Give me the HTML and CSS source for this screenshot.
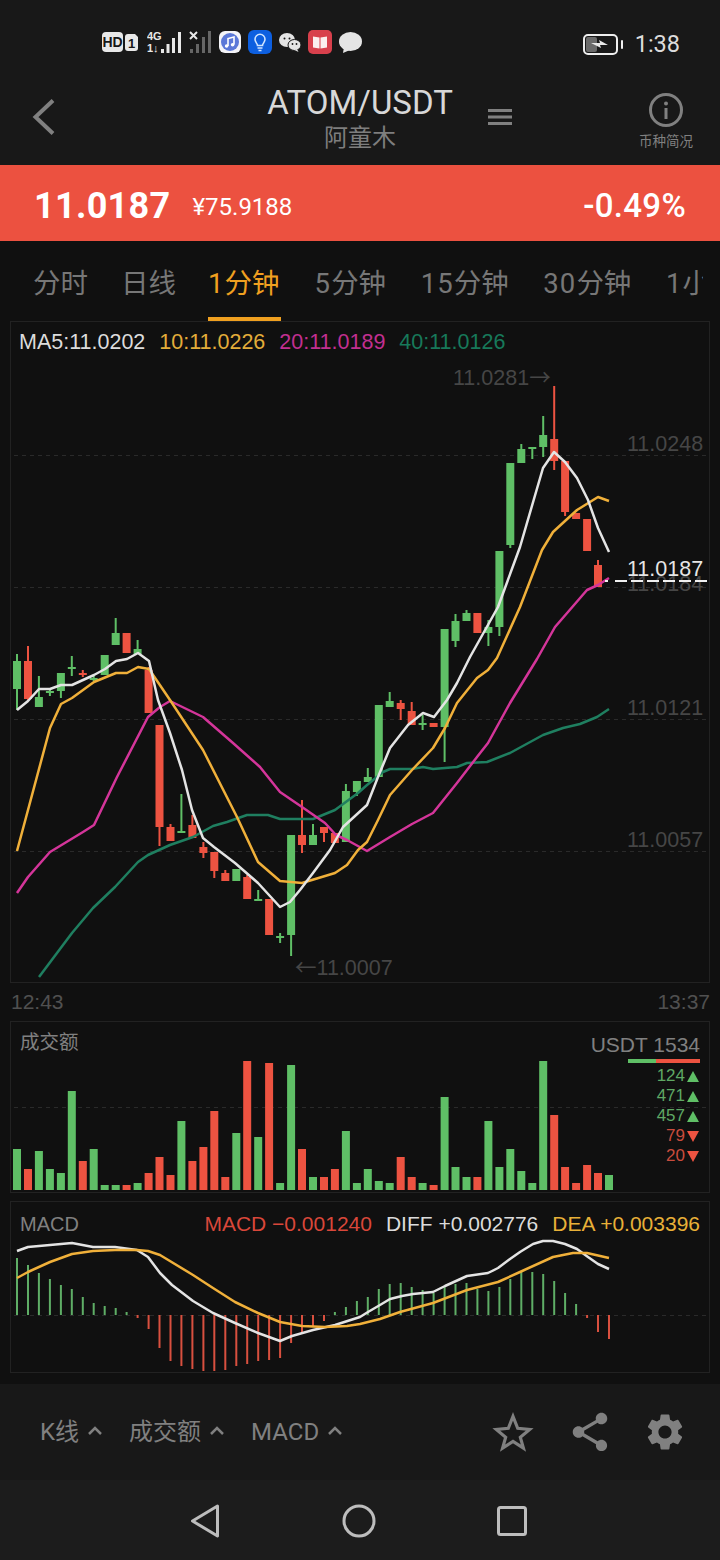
FILE: index.html

```html
<!DOCTYPE html>
<html lang="zh">
<head>
    <meta charset="UTF-8">
    <meta name="viewport" content="width=device-width, initial-scale=1.0">
    <title>ATOM/USDT</title>
    <link rel="stylesheet" href="styles.css">
</head>
<body>
    <div class="status-bar">
        <div class="status-icons">
            <svg class="ic-hd" width="21" height="20" viewBox="0 0 21 20"><rect width="21" height="20" rx="4" fill="#e8e8e8"/><text x="10.5" y="15" class="hd-text">HD</text></svg>
            <svg class="ic-sim" width="13" height="17" viewBox="0 0 13 17"><path d="M3 0h7l3 3v11a3 3 0 0 1-3 3H3a3 3 0 0 1-3-3V3a3 3 0 0 1 3-3z" fill="#e8e8e8"/><text x="6.5" y="13.5" class="sim-text">1</text></svg>
            <svg width="35" height="23" viewBox="0 0 35 23">
                <text x="0" y="9" class="net-text">4G</text>
                <text x="0" y="21" class="net-text">1↓</text>
                <g fill="#e8e8e8"><rect x="14" y="18" width="3" height="4"/><rect x="19.5" y="13" width="3" height="9"/><rect x="25" y="7" width="3" height="15"/><rect x="31" y="1" width="3" height="21"/></g>
            </svg>
            <svg width="23" height="23" viewBox="0 0 23 23">
                <path d="M1 1l7 7M8 1L1 8" stroke="#e8e8e8" stroke-width="2"/>
                <g fill="#666"><rect x="1" y="18" width="3" height="4"/><rect x="7" y="13" width="3" height="9"/><rect x="13" y="6" width="3" height="16"/><rect x="19" y="0" width="3" height="22"/></g>
            </svg>
            <svg width="22" height="22" viewBox="0 0 22 22"><rect width="22" height="22" rx="6" fill="#f4f4f8"/><circle cx="11" cy="11" r="9" fill="#5b78d8"/><path d="M9 15V7.5l6-1.5v7.5" fill="none" stroke="#fff" stroke-width="1.6"/><circle cx="7.6" cy="15" r="1.8" fill="#fff"/><circle cx="13.6" cy="13.8" r="1.8" fill="#fff"/></svg>
            <svg width="24" height="24" viewBox="0 0 24 24"><rect width="24" height="24" rx="6" fill="#0d5fe0"/><path d="M9.500 15.500c0-2-2.500-3-2.500-6.200a5 5 0 0 1 10 0c0 3.200-2.500 4.200-2.500 6.200z" fill="none" stroke="#cfe4ff" stroke-width="1.6"/><path d="M9.500 18h5M10.500 20.500h3" stroke="#cfe4ff" stroke-width="1.500"/></svg>
            <svg width="22" height="19" viewBox="0 0 22 19"><ellipse cx="8" cy="7" rx="8" ry="7" fill="#e4e4e4"/><ellipse cx="15.500" cy="12" rx="6.500" ry="5.500" fill="#e4e4e4" stroke="#171717"/><path d="M18 16l1.500 3-4-2z" fill="#e4e4e4"/><circle cx="5.500" cy="5.500" r="1" fill="#171717"/><circle cx="10.500" cy="5.500" r="1" fill="#171717"/><circle cx="13.500" cy="11" r=".9" fill="#171717"/><circle cx="17.500" cy="11" r=".9" fill="#171717"/></svg>
            <svg width="24" height="24" viewBox="0 0 24 24"><rect width="24" height="24" rx="5" fill="#d8404c"/><path d="M5 6.500l6.500 1v11l-6.500-1zM19 6.500l-6.500 1v11l6.500-1z" fill="#fbeeee"/></svg>
            <svg width="23" height="21" viewBox="0 0 23 21"><ellipse cx="11.500" cy="9.500" rx="11.500" ry="9.500" fill="#e4e4e4"/><path d="M5 15l-1 6 7-3z" fill="#e4e4e4"/></svg>
        </div>
        <div class="status-right">
            <svg width="41" height="21" viewBox="0 0 41 21">
                <rect x="1" y="1" width="33" height="19" rx="4" fill="none" stroke="#eee" stroke-width="2"/>
                <rect x="3" y="3" width="11" height="15" rx="2" fill="#6a6a6a"/>
                <path d="M8 9h9l-1-3 9 5h-8l1 3z" fill="#e8e8e8"/>
                <rect x="38" y="6" width="2" height="9" rx="1" fill="#eee"/>
            </svg>
            <span class="clock">1:38</span>
        </div>
    </div>

    <div class="header">
        <div class="header-left">
            <svg width="24" height="38" viewBox="0 0 24 38"><path d="M21 2.500L3.500 19 21 35.500" fill="none" stroke="#808080" stroke-width="4"/></svg>
        </div>
        <div class="title-block">
            <div class="pair">ATOM/USDT</div>
            <div class="pair-cn">阿童木</div>
        </div>
        <div class="header-right">
            <svg class="menu-icon" width="24" height="16" viewBox="0 0 24 16"><path d="M0 1.500h24M0 8h24M0 14.500h24" stroke="#808080" stroke-width="3"/></svg>
            <div class="coin-info">
                <svg width="34" height="34" viewBox="0 0 34 34"><circle cx="17" cy="17" r="15.500" fill="none" stroke="#808080" stroke-width="3"/><circle cx="17" cy="10.500" r="2" fill="#808080"/><rect x="15.500" y="15" width="3" height="11" fill="#808080"/></svg>
                <span class="coin-info-label">币种简况</span>
            </div>
        </div>
    </div>

    <div class="price-bar">
        <span class="price">11.0187</span>
        <span class="price-cny">¥75.9188</span>
        <span class="price-change">-0.49%</span>
    </div>

    <div class="content">
        <div class="tabs">
            <span class="tab">分时</span>
            <span class="tab tab-daily">日线</span>
            <span class="tab active"><b>1</b>分钟</span>
            <span class="tab"><b>5</b>分钟</span>
            <span class="tab"><b>15</b>分钟</span>
            <span class="tab"><b>30</b>分钟</span>
            <span class="tab"><b>1</b>小时</span>
        </div>

        <div class="panel panel-kline">
            <div class="ma-legend">
                <span class="c-white">MA5:11.0202</span>
                <span class="c-orange">10:11.0226</span>
                <span class="c-magenta">20:11.0189</span>
                <span class="c-teal">40:11.0126</span>
            </div>
            <svg id="klineChart" width="698" height="660" viewBox="11 322 698 660"></svg>
        </div>

        <div class="time-row">
            <span>12:43</span>
            <span>13:37</span>
        </div>

        <div class="panel panel-small">
            <div class="panel-title">成交额</div>
            <div class="depth">
                <div class="depth-head">USDT 1534</div>
                <div class="depth-bar"><i class="depth-up"></i><i class="depth-down"></i></div>
                <div class="depth-row up">124<i class="tri-up"></i></div>
                <div class="depth-row up">471<i class="tri-up"></i></div>
                <div class="depth-row up">457<i class="tri-up"></i></div>
                <div class="depth-row down">79<i class="tri-down"></i></div>
                <div class="depth-row down">20<i class="tri-down"></i></div>
            </div>
            <svg id="volumeChart" width="698" height="170" viewBox="11 1022 698 170"></svg>
        </div>

        <div class="panel panel-small panel-macd">
            <div class="macd-head">
                <span class="macd-name">MACD</span>
                <span class="c-red macd-first">MACD −0.001240</span>
                <span class="c-white">DIFF +0.002776</span>
                <span class="c-yellow">DEA +0.003396</span>
            </div>
            <svg id="macdChart" width="698" height="170" viewBox="11 1202 698 170"></svg>
        </div>
    </div>

    <div class="toolbar">
        <span class="tool-item">K线<svg width="14" height="9" viewBox="0 0 14 9"><path d="M1 8l6-6 6 6" fill="none" stroke="#808080" stroke-width="2.500"/></svg></span>
        <span class="tool-item">成交额<svg width="14" height="9" viewBox="0 0 14 9"><path d="M1 8l6-6 6 6" fill="none" stroke="#808080" stroke-width="2.500"/></svg></span>
        <span class="tool-item">MACD<svg width="14" height="9" viewBox="0 0 14 9"><path d="M1 8l6-6 6 6" fill="none" stroke="#808080" stroke-width="2.500"/></svg></span>
        <div class="tool-icons">
            <svg width="48" height="48" viewBox="0 0 46 46"><path d="M23 8l4.500 11.500 11.500 1-9 7.500 3 10.500-10-6.500-10 6.500 3-10.500-9-7.500 11.500-1z" fill="none" stroke="#808080" stroke-width="3" stroke-linejoin="miter"/></svg>
            <svg width="46" height="46" viewBox="0 0 24 24"><path fill="#808080" d="M18 16.080c-.76 0-1.440.3-1.960.77L8.910 12.700c.05-.23.09-.46.09-.7s-.04-.47-.09-.7l7.050-4.110c.54.5 1.250.81 2.040.81 1.660 0 3-1.340 3-3s-1.340-3-3-3-3 1.340-3 3c0 .24.04.47.09.7L8.040 9.810C7.500 9.310 6.790 9 6 9c-1.660 0-3 1.340-3 3s1.340 3 3 3c.79 0 1.500-.31 2.040-.81l7.120 4.160c-.05.21-.08.43-.08.65 0 1.610 1.310 2.920 2.920 2.920 1.610 0 2.920-1.310 2.920-2.920s-1.310-2.920-2.920-2.920z"/></svg>
            <svg width="44" height="44" viewBox="0 0 24 24"><path fill="#808080" d="M19.140 12.940c.04-.3.06-.61.06-.94 0-.32-.02-.64-.07-.94l2.030-1.580a.49.49 0 0 0 .12-.61l-1.920-3.320a.488.488 0 0 0-.59-.22l-2.390.96c-.5-.38-1.030-.7-1.620-.94l-.36-2.540a.484.484 0 0 0-.48-.41h-3.840c-.24 0-.43.17-.47.41l-.36 2.540c-.59.24-1.130.57-1.620.94l-2.390-.96c-.22-.08-.47 0-.59.22L2.740 8.870c-.12.21-.08.47.12.61l2.030 1.580c-.05.3-.09.63-.09.94s.02.64.07.94l-2.030 1.580a.49.49 0 0 0-.12.61l1.920 3.320c.12.22.37.29.59.22l2.390-.96c.5.38 1.030.7 1.620.94l.36 2.540c.05.24.24.41.48.41h3.840c.24 0 .44-.17.47-.41l.36-2.540c.59-.24 1.130-.56 1.620-.94l2.390.96c.22.08.47 0 .59-.22l1.920-3.320c.12-.22.07-.47-.12-.61l-2.010-1.580zM12 15.600c-1.980 0-3.600-1.620-3.600-3.600s1.620-3.600 3.600-3.600 3.600 1.620 3.600 3.600-1.620 3.600-3.600 3.600z"/></svg>
        </div>
    </div>

    <div class="nav-bar">
        <svg width="30" height="34" viewBox="0 0 30 34"><path d="M27.500 2L2.500 17l25 15z" fill="none" stroke="#bdbdbd" stroke-width="3" stroke-linejoin="round"/></svg>
        <svg width="34" height="34" viewBox="0 0 34 34"><circle cx="17" cy="17" r="15" fill="none" stroke="#bdbdbd" stroke-width="3"/></svg>
        <svg width="30" height="30" viewBox="0 0 30 30"><rect x="1.500" y="1.500" width="27" height="27" rx="2" fill="none" stroke="#bdbdbd" stroke-width="3"/></svg>
    </div>

    <script src="chart.js"></script>
</body>
</html>
```

FILE: styles.css

```css
* {
    box-sizing: border-box;
}
body {
    margin: 0;
    width: 720px;
    height: 1560px;
    overflow: hidden;
    background-color: #181818;
    font-family: Roboto, "Noto Sans CJK SC", sans-serif;
    color: #808080;
}
svg {
    display: block;
    flex-shrink: 0;
}
i {
    display: block;
}

/* status bar */
.status-bar {
    height: 80px;
    padding: 30px 40px 0 102px;
    display: flex;
    justify-content: space-between;
    align-items: flex-start;
}
.status-icons {
    display: flex;
    align-items: center;
    gap: 7px;
    height: 24px;
}
.ic-hd {
    margin-right: -5px;
}
.ic-sim {
    margin-right: 2px;
}
.hd-text {
    font: 700 14px "Liberation Sans", sans-serif;
    fill: #171717;
    text-anchor: middle;
}
.sim-text {
    font: 700 13px "Liberation Sans", sans-serif;
    fill: #171717;
    text-anchor: middle;
}
.net-text {
    font: 700 11px "Liberation Sans", sans-serif;
    fill: #e8e8e8;
}
.status-right {
    display: flex;
    align-items: center;
    gap: 11px;
    margin-top: 2px;
}
.clock {
    font-size: 23.5px;
    line-height: 24px;
    color: #dcdcdc;
}

/* header */
.header {
    height: 85px;
    display: grid;
    grid-template-columns: 1fr auto 1fr;
}
.header-left {
    padding: 18px 0 0 32px;
}
.title-block {
    text-align: center;
    padding-top: 5px;
}
.pair {
    font-size: 33px;
    line-height: 36px;
    color: #d8d8d8;
}
.pair-cn {
    font-size: 24px;
    line-height: 34px;
    color: #7e7e7e;
}
.header-right {
    display: flex;
    padding-right: 27px;
}
.menu-icon {
    margin: 29px 0 0 35px;
}
.coin-info {
    margin-left: auto;
    padding-top: 13px;
    display: flex;
    flex-direction: column;
    align-items: center;
    gap: 4px;
}
.coin-info-label {
    font-size: 13.5px;
    line-height: 20px;
    color: #808080;
}

/* price */
.price-bar {
    height: 76px;
    padding: 5px 34px 0;
    background-color: #ec5140;
    color: #fff;
    display: flex;
    align-items: center;
}
.price {
    font-size: 36px;
    font-weight: 700;
    letter-spacing: .3px;
}
.price-cny {
    font-size: 24px;
    margin: 3px 0 0 22px;
}
.price-change {
    font-size: 33px;
    font-weight: 500;
    letter-spacing: .3px;
    margin-left: auto;
}

/* tabs + chart area */
.content {
    height: 1143px;
    background-color: #101010;
}
.tabs {
    height: 80px;
    margin-right: 17px;
    padding-left: 33px;
    display: flex;
    gap: 34.5px;
    overflow: hidden;
}
.tab {
    flex-shrink: 0;
    padding: 24px 0 0;
    font-size: 27.5px;
    line-height: 38px;
    color: #777;
}
.tab b {
    font-weight: 400;
    letter-spacing: 1.100px;
}
.tab-daily {
    margin-left: -1.500px;
}
.tab.active {
    color: #f0a020;
    margin: 0 -1px 0 -2.500px;
    padding-right: 1.500px;
    border-bottom: 4px solid #f0a020;
}

.panel {
    position: relative;
    width: 700px;
    margin-left: 10px;
    border: 1px solid #222;
}
.panel-kline {
    height: 662px;
}
.panel-small {
    height: 172px;
}
.panel-macd {
    margin-top: 8px;
}
.ma-legend {
    position: absolute;
    top: 8px;
    left: 8px;
    display: flex;
    gap: 14px;
    font: 21.5px/24px "Liberation Sans", sans-serif;
}
.c-white {
    color: #dcdcdc;
}
.c-orange {
    color: #e3ad3a;
}
.c-yellow {
    color: #e8b038;
}
.c-magenta {
    color: #c22f90;
}
.c-teal {
    color: #17795a;
}
.c-red {
    color: #d9473a;
}
.axis-label {
    font: 21.5px "Liberation Sans", sans-serif;
    fill: #464646;
}
.axis-label.now {
    fill: #e6e6e6;
}
.arrow {
    font-family: "Noto Sans CJK SC", sans-serif;
}
.time-row {
    height: 38px;
    padding: 7px 10px 0 11px;
    display: flex;
    justify-content: space-between;
    font: 21px/24px "Liberation Sans", sans-serif;
    color: #505050;
}

/* volume */
.panel-title {
    position: absolute;
    top: 8px;
    left: 9px;
    font-size: 19.500px;
    line-height: 26px;
    color: #808080;
}
.depth {
    position: absolute;
    top: 11px;
    right: 9px;
    display: flex;
    flex-direction: column;
    align-items: flex-end;
    font-family: "Liberation Sans", sans-serif;
}
.depth-head {
    font-size: 21px;
    line-height: 24px;
    color: #808080;
}
.depth-bar {
    display: flex;
    width: 72px;
    height: 4px;
    margin: 2px 0 3px;
}
.depth-up {
    width: 28px;
    background-color: #5fbf66;
}
.depth-down {
    flex: 1;
    background-color: #ed5341;
}
.depth-row {
    display: flex;
    align-items: center;
    gap: 2px;
    height: 20px;
    font-size: 17px;
}
.depth-row.up {
    color: #5fa864;
}
.depth-row.down {
    color: #c94c3d;
}
.tri-up {
    width: 0;
    height: 0;
    margin-right: 1px;
    border-left: 6.500px solid transparent;
    border-right: 6.500px solid transparent;
    border-bottom: 11px solid #5fbf66;
}
.tri-down {
    width: 0;
    height: 0;
    margin-right: 1px;
    border-left: 6.500px solid transparent;
    border-right: 6.500px solid transparent;
    border-top: 11px solid #ed5341;
}

/* macd */
.macd-head {
    position: absolute;
    top: 10px;
    left: 9px;
    right: 9px;
    display: flex;
    gap: 14px;
    font: 21px/24px "Liberation Sans", sans-serif;
}
.macd-name {
    font-size: 20px;
    color: #808080;
}
.macd-first {
    margin-left: auto;
}

/* bottom */
.toolbar {
    height: 96px;
    padding: 0 33px 0 40px;
    display: flex;
    align-items: center;
    gap: 27px;
    font-size: 24px;
    line-height: 32px;
    color: #808080;
}
.tool-item {
    display: flex;
    align-items: center;
    gap: 9px;
}
.tool-item svg {
    margin-top: -4px;
}
.tool-icons {
    margin-left: auto;
    display: flex;
    align-items: center;
    gap: 30px;
}
.nav-bar {
    height: 81px;
    background-color: #1c1c1c;
    padding: 0 193px 0 190px;
    display: flex;
    align-items: center;
    justify-content: space-between;
}
```

FILE: chart.js

```js
var GREEN = '#5fbf66', RED = '#ed5341';
var step = (609 - 17) / 54;

function xAt(i) {
    return 17 + step * i;
}

// type, body top, body bottom, wick top, wick bottom (page pixels)
var candles = [
    ['g',661,689,654,710],['r',661,699,646,700],['g',697,707,676,707],['g',691,693,688,696],
    ['g',673,691,673,698],['g',667,669,656,676],['r',673,675,670,677],['g',678,680,676,681],
    ['g',655,675,655,675],['g',633,645,618,645],['r',633,653,633,653],['g',649,654,640,654],
    ['r',670,713,667,713],['r',725,827,725,846],['r',827,841,824,841],['g',831,833,794,833],
    ['r',825,838,815,838],['r',847,853,842,858],['r',852,871,852,878],['r',873,881,870,881],
    ['g',869,881,869,881],['r',877,899,875,899],['g',899,901,890,901],['r',899,935,899,935],
    ['g',936,938,933,943],['g',835,935,835,956],['r',835,845,800,853],['g',835,845,824,845],
    ['r',827,833,827,842],['r',833,843,833,843],['g',791,842,784,842],['g',781,792,781,796],
    ['g',777,782,768,782],['g',705,777,705,777],['g',701,707,692,707],['r',703,709,700,720],
    ['r',711,725,702,725],['g',723,725,715,730],['r',723,727,723,727],['g',629,727,629,762],
    ['g',621,641,614,647],['g',613,621,610,621],['r',613,633,613,633],['g',627,633,620,646],
    ['g',551,627,551,636],['g',463,545,463,548],['g',449,463,444,463],['g',447,449,447,459],
    ['g',435,447,416,457],['r',439,461,386,470],['r',461,512,461,516],['r',513,519,513,519],
    ['r',519,551,519,551],['r',565,587,560,587]
];

var ma5 = [[17,710],[28,701],[39,689],[50,689],[61,685],[72,685],[83,680],[94,675],[105,669],[116,661],[127,659],[138,653],[149,661],[158,700],[170,733],[182,770],[192,810],[203,838],[214,847],[235,863],[258,883],[280,907],[290,902],[300,890],[313,873],[330,850],[343,827],[367,805],[378,777],[390,748],[408,725],[423,713],[434,717],[447,700],[457,683],[470,657],[498,607],[520,547],[543,468],[554,452],[565,462],[577,478],[588,500],[598,528],[609,552]];
var ma10 = [[17,851],[50,728],[61,704],[72,698],[94,682],[116,673],[127,673],[138,667],[149,669],[170,700],[203,750],[237,817],[258,862],[280,881],[302,883],[335,873],[347,865],[358,850],[367,842],[378,820],[390,795],[412,770],[433,748],[445,728],[457,703],[477,678],[488,670],[497,658],[520,607],[542,550],[553,532],[577,510],[598,497],[609,501]];
var ma20 = [[17,893],[28,877],[50,852],[83,832],[94,825],[117,777],[148,717],[160,707],[170,701],[203,717],[233,743],[260,767],[280,792],[302,807],[325,823],[336,835],[347,840],[367,851],[390,837],[412,824],[433,813],[457,783],[477,757],[488,743],[510,703],[537,659],[555,627],[587,590],[598,585],[609,578]];
var ma40 = [[39,977],[72,933],[93,908],[115,887],[138,862],[148,855],[170,845],[193,837],[213,826],[227,822],[247,815],[268,815],[280,819],[313,819],[335,810],[358,793],[367,785],[383,772],[390,769],[412,769],[423,767],[433,769],[457,767],[467,763],[487,762],[510,753],[543,735],[563,728],[580,724],[597,717],[609,709]];

// bar tops on the volume panel, baseline is y=1190
var volumes = [
    ['g',1149],['r',1169],['g',1151],['g',1169],['g',1173],['g',1091],['r',1161],['g',1149],['g',1185],
    ['g',1185],['r',1185],['g',1183],['r',1173],['r',1157],['r',1175],['g',1121],['r',1161],['r',1147],
    ['r',1111],['r',1177],['g',1133],['r',1061],['g',1137],['r',1063],['g',1183],['g',1065],['r',1149],
    ['g',1177],['r',1177],['r',1169],['g',1131],['g',1183],['g',1169],['g',1181],['g',1183],['r',1157],
    ['r',1177],['g',1183],['r',1185],['g',1097],['g',1167],['g',1177],['r',1177],['g',1121],['g',1167],
    ['g',1149],['g',1171],['g',1183],['g',1061],['r',1115],['r',1167],['r',1183],['r',1165],['r',1173],
    ['g',1175]
];

// histogram tips on the macd panel, zero line is y=1315
var macdBars = [1258,1265,1273,1279,1285,1289,1297,1303,1306,1308,1312,1318,1329,1348,1361,1366,1369,1371,1371,1370,1366,1364,1361,1360,1358,1343,1334,1327,1321,1312,1307,1301,1297,1289,1284,1283,1287,1290,1293,1287,1284,1283,1289,1291,1287,1279,1272,1272,1274,1281,1293,1304,1318,1332,1339];
var diff = [[17,1251],[28,1247],[50,1245],[72,1243],[93,1247],[115,1247],[137,1250],[148,1257],[160,1273],[172,1285],[193,1301],[213,1313],[235,1323],[258,1333],[280,1341],[292,1336],[313,1330],[335,1325],[360,1317],[368,1312],[380,1305],[390,1299],[402,1296],[413,1294],[433,1292],[445,1286],[467,1276],[488,1273],[498,1268],[510,1259],[520,1252],[533,1244],[543,1241],[553,1241],[565,1244],[577,1249],[588,1257],[598,1264],[609,1269]];
var dea = [[17,1278],[28,1272],[50,1262],[72,1254],[93,1251],[115,1250],[137,1250],[148,1251],[160,1255],[193,1275],[213,1288],[235,1302],[258,1313],[280,1322],[302,1326],[325,1327],[347,1326],[360,1324],[380,1319],[400,1312],[433,1303],[467,1290],[498,1282],[520,1272],[553,1257],[573,1253],[587,1253],[609,1258]];

function rect(x, y, w, h, fill) {
    return '<rect x="' + x.toFixed(1) + '" y="' + y + '" width="' + w + '" height="' + h + '" fill="' + fill + '"/>';
}
function line(pts, color) {
    return '<polyline points="' + pts.join(' ') + '" fill="none" stroke="' + color + '" stroke-width="2.5" stroke-linejoin="round"/>';
}
function dash(y, x1, x2, color, pattern, width) {
    return '<line x1="' + x1 + '" x2="' + x2 + '" y1="' + y + '" y2="' + y + '" stroke="' + color + '" stroke-width="' + (width || 1) + '" stroke-dasharray="' + pattern + '"/>';
}
function label(x, y, text, cls) {
    return '<text x="' + x + '" y="' + y + '" class="axis-label ' + (cls || '') + '">' + text + '</text>';
}

function drawKline() {
    var html = '';
    [455.5, 587.5, 719.5, 851.5].forEach(function (y) {
        html += dash(y, 14, 706, '#2a2a2a', '4 4');
    });
    html += label(627, 451, '11.0248');
    html += label(627, 591, '11.0184');
    html += label(627, 715, '11.0121');
    html += label(627, 847, '11.0057');
    html += label(453, 385, '11.0281<tspan class="arrow">→</tspan>');
    html += label(295, 975, '<tspan class="arrow">←</tspan>11.0007');

    candles.forEach(function (c, i) {
        var color = c[0] === 'g' ? GREEN : RED;
        var x = xAt(i);
        html += rect(x - 1, c[3], 2, c[4] - c[3], color);
        html += rect(x - 4, c[1], 8, c[2] - c[1], color);
    });

    html += line(ma40, '#1f7f60');
    html += line(ma20, '#d4359a');
    html += line(ma10, '#f0b03a');
    html += line(ma5, '#e4e4e4');

    html += dash(581, 605, 709, '#f0f0f0', '3 7 12 4 12 4 12 4 12 4 12 4 12 4', 2);
    html += label(627, 576, '11.0187', 'now');
    document.getElementById('klineChart').innerHTML = html;
}

function drawVolume() {
    var html = dash(1107.5, 14, 706, '#2a2a2a', '4 4');
    volumes.forEach(function (v, i) {
        html += rect(xAt(i) - 4, v[1], 8, 1190 - v[1], v[0] === 'g' ? GREEN : RED);
    });
    document.getElementById('volumeChart').innerHTML = html;
}

function drawMacd() {
    var html = dash(1315.5, 14, 706, '#2a2a2a', '4 4');
    macdBars.forEach(function (tip, i) {
        var x = xAt(i) - 1;
        if (tip < 1315) {
            html += rect(x, tip, 2, 1315 - tip, '#5fae66');
        } else {
            html += rect(x, 1315, 2, tip - 1315, '#d9503f');
        }
    });
    html += line(diff, '#e4e4e4');
    html += line(dea, '#f0b03a');
    document.getElementById('macdChart').innerHTML = html;
}

drawKline();
drawVolume();
drawMacd();
```
